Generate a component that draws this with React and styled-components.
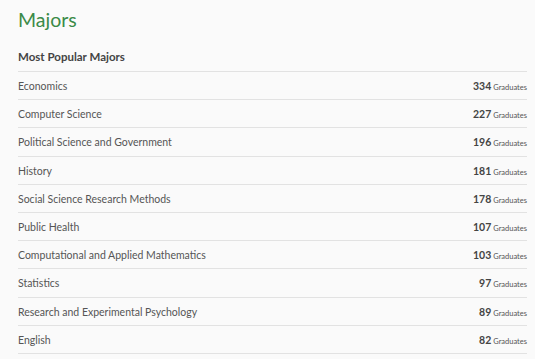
import React from "react";
import styled, { createGlobalStyle } from "styled-components";

const majors = [
  { name: "Economics", count: 334 },
  { name: "Computer Science", count: 227 },
  { name: "Political Science and Government", count: 196 },
  { name: "History", count: 181 },
  { name: "Social Science Research Methods", count: 178 },
  { name: "Public Health", count: 107 },
  { name: "Computational and Applied Mathematics", count: 103 },
  { name: "Statistics", count: 97 },
  { name: "Research and Experimental Psychology", count: 89 },
  { name: "English", count: 82 },
];

export default function App() {
  return (
    <>
      <GlobalStyle />
      <Page>
        <Heading>Majors</Heading>
        <SubHeading>Most Popular Majors</SubHeading>
        <List>
          {majors.map((m) => (
            <Row key={m.name}>
              <Name>{m.name}</Name>
              <Count>
                <Num>{m.count}</Num>
                <Unit>Graduates</Unit>
              </Count>
            </Row>
          ))}
        </List>
      </Page>
    </>
  );
}

// ----- Styled Components -----
const GlobalStyle = createGlobalStyle`
  html, body {
    margin: 0;
    background: #fafafa;
  }
  body {
    font-family: Lato, "Liberation Sans", sans-serif;
  }
`;

const Page = styled.div`
  width: 535px;
  height: 359px;
  padding: 0 8px 0 18px;
  box-sizing: border-box;
  overflow: hidden;
`;

const Heading = styled.h1`
  margin: 0;
  padding-top: 6px;
  font-size: 19.5px;
  font-weight: 400;
  line-height: 28px;
  color: #3a8a48;
`;

const SubHeading = styled.div`
  margin-top: 9px;
  height: 28px;
  font-size: 11.5px;
  font-weight: 700;
  line-height: 28px;
  color: #444;
  border-bottom: 1px solid #e2e2e2;
`;

const List = styled.div`
  display: flex;
  flex-direction: column;
`;

const Row = styled.div`
  display: flex;
  align-items: center;
  justify-content: space-between;
  height: 28.2px;
  padding-top: 1px;
  box-sizing: border-box;
  border-bottom: 1px solid #e2e2e2;
`;

const Name = styled.span`
  font-size: 10.5px;
  color: #555;
`;

const Count = styled.span`
  display: flex;
  align-items: baseline;
  gap: 2px;
`;

const Num = styled.span`
  font-size: 10.5px;
  font-weight: 700;
  color: #444;
`;

const Unit = styled.span`
  font-size: 7.5px;
  color: #555;
`;
